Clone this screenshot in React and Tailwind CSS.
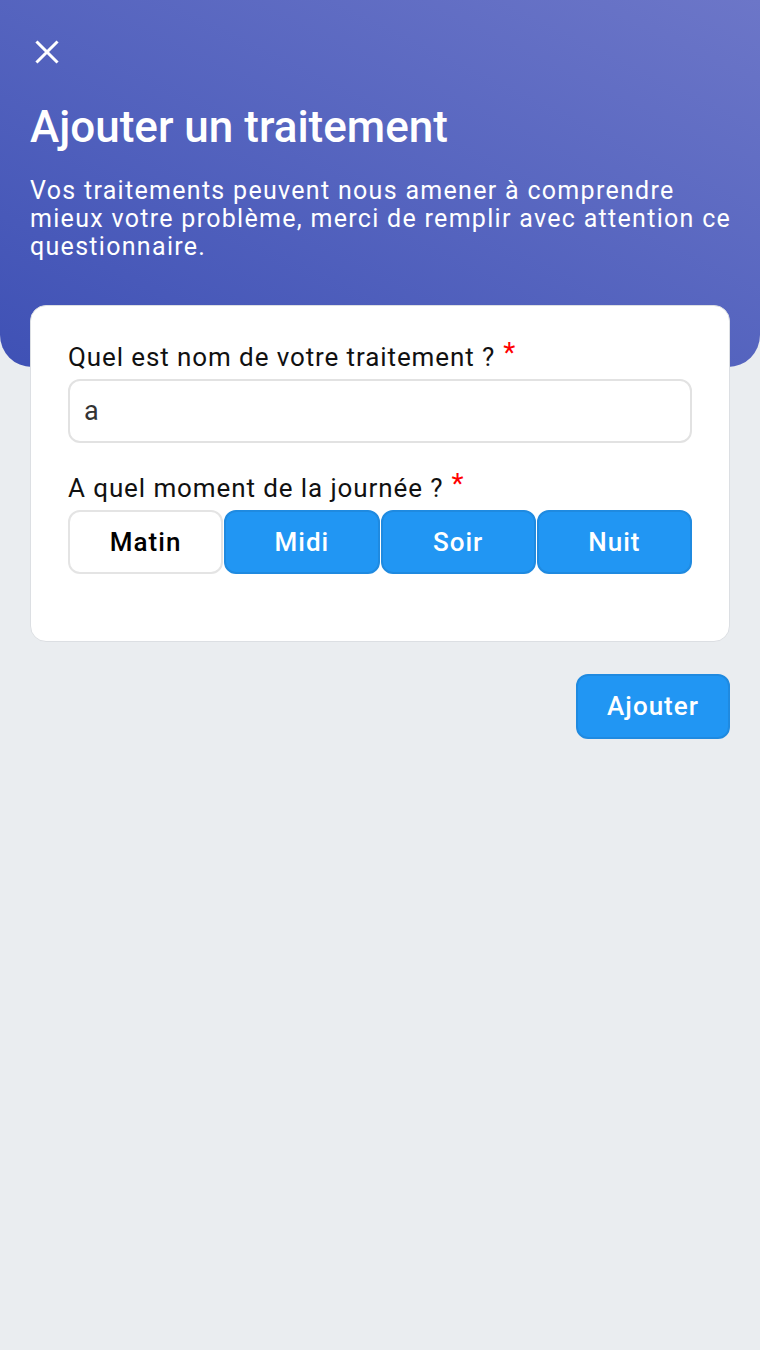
import React from "react";

export default function App() {
  const font = { fontFamily: "Roboto, 'Noto Sans', sans-serif" };
  return (
    <div className="min-h-[1350px] w-[760px] bg-[#eaedf0]" style={font}>
      <div className="rounded-b-[32px] bg-linear-to-tr from-[#3f51b5] to-[#6c76c8] pl-[30px] pr-[18px] pt-[40px] pb-[106px] text-white">
        <svg width="24" height="24" viewBox="0 0 24 24" className="ml-[5px]" fill="none" stroke="white" strokeWidth="3" strokeLinecap="square">
          <path d="M2.5 2.5 L21.5 21.5 M21.5 2.5 L2.5 21.5" />
        </svg>
        <h1 className="mt-[37px] text-[44px] leading-[52px] font-medium">Ajouter un traitement</h1>
        <p className="mt-[24px] text-[25px] leading-[28px] tracking-[1.3px]">
          Vos traitements peuvent nous amener à comprendre mieux votre problème, merci de remplir avec attention ce questionnaire.
        </p>
      </div>
      <div className="mx-[30px] -mt-[62px] rounded-[16px] border border-[#dcdfe3] bg-white px-[37px] pt-[36px] pb-[67px]">
        <label className="flex items-start text-[26px] leading-[30px] tracking-[0.9px] text-[#111]">
          Quel est nom de votre traitement ?
          <span className="ml-[8px] -mt-[3px] text-[28px] leading-[28px] text-[#ff0000]">*</span>
        </label>
        <div className="mt-[7px] flex h-[64px] items-center rounded-[12px] border-2 border-[#e2e2e2] px-[14px] text-[27px] text-[#333]">
          a
        </div>
        <label className="mt-[30px] flex items-start text-[26px] leading-[30px] tracking-[0.9px] text-[#111]">
          A quel moment de la journée ?
          <span className="ml-[8px] -mt-[3px] text-[28px] leading-[28px] text-[#ff0000]">*</span>
        </label>
        <div className="mt-[7px] grid grid-cols-4 gap-[1px]">
          <div className="flex h-[64px] items-center justify-center rounded-[12px] border-2 border-[#e4e4e4] bg-white text-[26px] font-medium tracking-[1px] text-black">
            Matin
          </div>
          {["Midi", "Soir", "Nuit"].map((t) => (
            <div key={t} className="flex h-[64px] items-center justify-center rounded-[12px] border-2 border-[#1f8ae0] bg-[#2196f3] text-[26px] font-medium tracking-[1px] text-white">
              {t}
            </div>
          ))}
        </div>
      </div>
      <div className="mt-[32px] flex justify-end pr-[30px]">
        <div className="flex h-[65px] w-[154px] items-center justify-center rounded-[12px] border-2 border-[#1f8ae0] bg-[#2196f3] text-[26px] font-medium tracking-[1px] text-white">
          Ajouter
        </div>
      </div>
    </div>
  );
}
